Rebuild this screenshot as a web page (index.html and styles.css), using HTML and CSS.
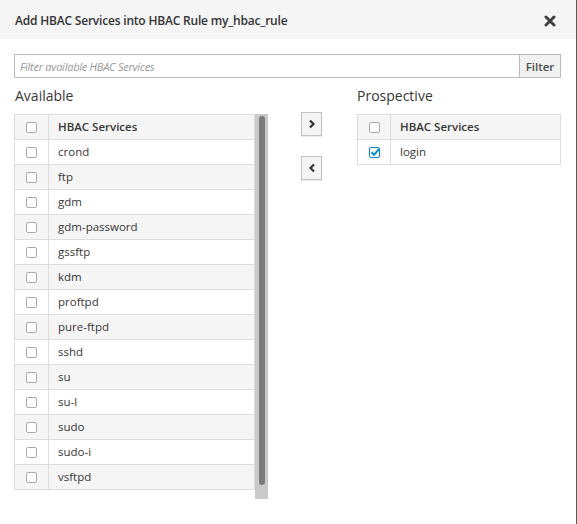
FILE: index.html
```html
<!DOCTYPE html>
<html>
<head>
<meta charset="utf-8">
<link rel="stylesheet" href="styles.css">
</head>
<body>
<div class="dialog">
  <div class="header">
    <h4 class="title">Add HBAC Services into HBAC Rule my_hbac_rule</h4>
    <span class="close"><svg width="12" height="12" viewBox="0 0 12 12"><path d="M2 2 L10 10 M10 2 L2 10" stroke="#3f3f3f" stroke-width="3" stroke-linecap="round"/></svg></span>
  </div>
  <div class="body">
    <div class="filter">
      <input class="filter-input" type="text" placeholder="Filter available HBAC Services">
      <button class="filter-btn">Filter</button>
    </div>
    <div class="columns">
      <div class="col-left">
        <div class="col-label">Available</div>
        <div class="scroll-wrap">
          <table class="grid">
            <tr class="head"><td class="cb"><span class="box"></span></td><td>HBAC Services</td></tr>
            <tr><td class="cb"><span class="box"></span></td><td>crond</td></tr>
            <tr class="alt"><td class="cb"><span class="box"></span></td><td>ftp</td></tr>
            <tr><td class="cb"><span class="box"></span></td><td>gdm</td></tr>
            <tr class="alt"><td class="cb"><span class="box"></span></td><td>gdm-password</td></tr>
            <tr><td class="cb"><span class="box"></span></td><td>gssftp</td></tr>
            <tr class="alt"><td class="cb"><span class="box"></span></td><td>kdm</td></tr>
            <tr><td class="cb"><span class="box"></span></td><td>proftpd</td></tr>
            <tr class="alt"><td class="cb"><span class="box"></span></td><td>pure-ftpd</td></tr>
            <tr><td class="cb"><span class="box"></span></td><td>sshd</td></tr>
            <tr class="alt"><td class="cb"><span class="box"></span></td><td>su</td></tr>
            <tr><td class="cb"><span class="box"></span></td><td>su-l</td></tr>
            <tr class="alt"><td class="cb"><span class="box"></span></td><td>sudo</td></tr>
            <tr><td class="cb"><span class="box"></span></td><td>sudo-i</td></tr>
            <tr class="alt"><td class="cb"><span class="box"></span></td><td>vsftpd</td></tr>
          </table>
          <div class="track"><div class="thumb"></div></div>
        </div>
      </div>
      <div class="col-mid">
        <button class="move"><svg width="8" height="10" viewBox="0 0 8 10"><path d="M2 1.5 L5.5 5 L2 8.5" fill="none" stroke="#363636" stroke-width="2.2"/></svg></button>
        <button class="move"><svg width="8" height="10" viewBox="0 0 8 10"><path d="M6 1.5 L2.5 5 L6 8.5" fill="none" stroke="#363636" stroke-width="2.2"/></svg></button>
      </div>
      <div class="col-right">
        <div class="col-label right">Prospective</div>
        <table class="grid grid-right">
          <tr class="head"><td class="cb"><span class="box"></span></td><td>HBAC Services</td></tr>
          <tr><td class="cb"><span class="box checked"><svg width="10" height="9" viewBox="0 0 10 9"><path d="M1.5 4.2 L4 6.8 L9 1.2" fill="none" stroke="#0088ce" stroke-width="2"/></svg></span></td><td>login</td></tr>
        </table>
      </div>
    </div>
  </div>
</div>
</body>
</html>
```
FILE: styles.css
```css
* { box-sizing: border-box; }
html, body { margin: 0; padding: 0; background: #fff; }
body {
  font-family: "Open Sans", "Liberation Sans", sans-serif;
  color: #363636;
  font-size: 11.5px;
}
.dialog {
  width: 577px;
  height: 524px;
  border-right: 1px solid #5a5a5a;
  background: #fff;
}
.header {
  height: 39px;
  background: #f5f5f5;
  display: flex;
  align-items: center;
  justify-content: space-between;
  padding: 2px 20px 0 15px;
}
.title {
  margin: 0;
  font-size: 12px;
  font-weight: 600;
  letter-spacing: -0.2px;
  color: #333;
}
.close {
  display: flex;
  line-height: 1;
}
.body {
  padding: 15px 15px 0 14px;
}
.filter {
  display: flex;
  height: 24px;
}
.filter-input {
  flex: 1;
  height: 24px;
  margin: 0;
  border: 1px solid #bbb;
  border-right: none;
  padding: 0 5px;
  font-family: "Open Sans", sans-serif;
  font-size: 11px;
  color: #363636;
  outline: none;
}
.filter-input::placeholder {
  font-style: italic;
  color: #999;
  letter-spacing: -0.25px;
}
.filter-btn {
  width: 42px;
  height: 24px;
  margin: 0;
  border: 1px solid #bbb;
  background: #f1f1f1;
  font-family: "Open Sans", sans-serif;
  font-size: 11.5px;
  font-weight: 600;
  color: #4d4d4d;
  padding: 0;
}
.columns {
  display: flex;
  align-items: flex-start;
}
.col-label {
  font-size: 14px;
  line-height: 20px;
  margin: 8px 0 8px 1px;
  color: #363636;
}
.col-label.right { margin-left: 0; }
.col-left { width: 254px; }
.scroll-wrap {
  display: flex;
  height: 385px;
}
.grid {
  border-collapse: collapse;
  width: 241px;
  align-self: flex-start;
}
.grid td {
  height: 25px;
  padding: 0 10px 2px 9px;
  border: 1px solid #ddd;
  vertical-align: middle;
  line-height: 21px;
}
.grid tr.head td { background: #f5f5f5; font-weight: 600; }
.grid tr.alt td { background: #f5f5f5; }
.grid td.cb { width: 34px; padding: 0; text-align: center; }
.box {
  display: inline-block;
  width: 11px;
  height: 11px;
  border: 1px solid #aaa;
  border-radius: 2px;
  background: #fff;
  vertical-align: middle;
  position: relative;
  top: -1px;
}
.box.checked {
  border-color: #0088ce;
}
.box.checked svg { position: absolute; left: 0; top: 0; }
.track {
  width: 13px;
  height: 385px;
  background: #c9c9c9;
  padding: 2px 3px 0 4px;
}
.thumb {
  width: 6px;
  height: 369px;
  background: #7a7a7a;
  border-radius: 3px;
}
.col-mid {
  width: 103px;
  padding: 34px 0 0 33px;
  display: flex;
  flex-direction: column;
  gap: 20px;
}
.move {
  width: 21px;
  height: 24px;
  margin: 0;
  padding: 0;
  border: 1px solid #c2c2c2;
  background: #f4f4f4;
  display: flex;
  align-items: center;
  justify-content: center;
  box-shadow: 0 1px 1px rgba(0,0,0,0.08);
}
.col-right { width: 204px; }
.grid-right { width: 204px; }
.grid-right td.cb { width: 33px; }
```
